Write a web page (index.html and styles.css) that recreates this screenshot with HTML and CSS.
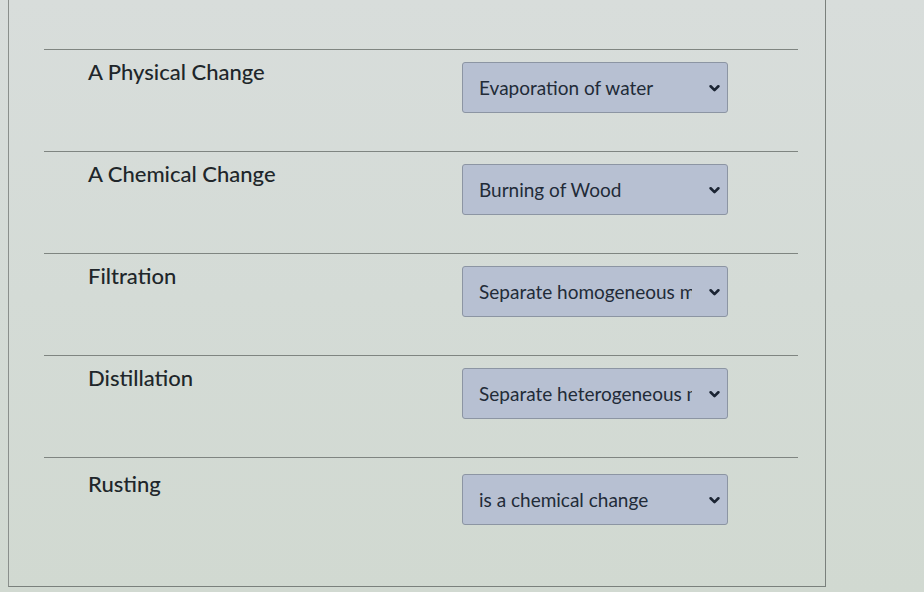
FILE: index.html
```html
<!DOCTYPE html>
<html>
<head>
<meta charset="utf-8">
<link rel="stylesheet" href="styles.css">
</head>
<body>
<div class="panel">
  <div class="row">
    <div class="label">A Physical Change</div>
    <div class="select"><span class="value">Evaporation of water</span><svg class="chev" viewBox="0 0 10 8"><path d="M1.5 2 L5 5.5 L8.5 2" /></svg></div>
  </div>
  <div class="row">
    <div class="label">A Chemical Change</div>
    <div class="select"><span class="value">Burning of Wood</span><svg class="chev" viewBox="0 0 10 8"><path d="M1.5 2 L5 5.5 L8.5 2" /></svg></div>
  </div>
  <div class="row">
    <div class="label">Filtration</div>
    <div class="select"><span class="value">Separate homogeneous mixtures</span><svg class="chev" viewBox="0 0 10 8"><path d="M1.5 2 L5 5.5 L8.5 2" /></svg></div>
  </div>
  <div class="row">
    <div class="label">Distillation</div>
    <div class="select"><span class="value">Separate heterogeneous mixtures</span><svg class="chev" viewBox="0 0 10 8"><path d="M1.5 2 L5 5.5 L8.5 2" /></svg></div>
  </div>
  <div class="row row-last">
    <div class="label">Rusting</div>
    <div class="select"><span class="value">is a chemical change</span><svg class="chev" viewBox="0 0 10 8"><path d="M1.5 2 L5 5.5 L8.5 2" /></svg></div>
  </div>
</div>
</body>
</html>
```

FILE: styles.css
```css
html, body {
  margin: 0;
  padding: 0;
}
body {
  width: 924px;
  height: 592px;
  overflow: hidden;
  background: linear-gradient(180deg, #d8dddb 0%, #d4dbd6 50%, #d1d9d1 100%);
  font-family: Lato, "Liberation Sans", sans-serif;
  color: #1f2528;
}
.panel {
  margin-left: 8px;
  width: 818px;
  height: 587px;
  box-sizing: border-box;
  border-left: 1px solid #8a8f8c;
  border-right: 1px solid #7a807c;
  border-bottom: 1px solid #7a807c;
  padding: 49px 0 0 35px;
}
.row {
  width: 754px;
  height: 102px;
  box-sizing: border-box;
  border-top: 1px solid #7f8581;
  display: flex;
  align-items: flex-start;
  padding-top: 9px;
}
.row-last {
  padding-top: 13px;
}
.label {
  width: 374px;
  padding-left: 44px;
  font-size: 22px;
  line-height: 26px;
  font-weight: 500;
  color: #20262a;
}
.select {
  width: 266px;
  height: 51px;
  box-sizing: border-box;
  margin-top: 3px;
  background: #b7c0d2;
  border: 1px solid #8c95a3;
  border-radius: 3px;
  display: flex;
  align-items: center;
  padding-left: 16px;
  padding-right: 7px;
}
.value {
  width: 213px;
  overflow: hidden;
  text-overflow: clip;
  white-space: nowrap;
  font-size: 19px;
  color: #222b38;
  flex: none;
}
.chev {
  width: 11px;
  height: 9px;
  margin-left: auto;
  margin-top: 2px;
}
.chev path {
  fill: none;
  stroke: #1b2433;
  stroke-width: 2.4;
  stroke-linecap: round;
  stroke-linejoin: round;
}
```
